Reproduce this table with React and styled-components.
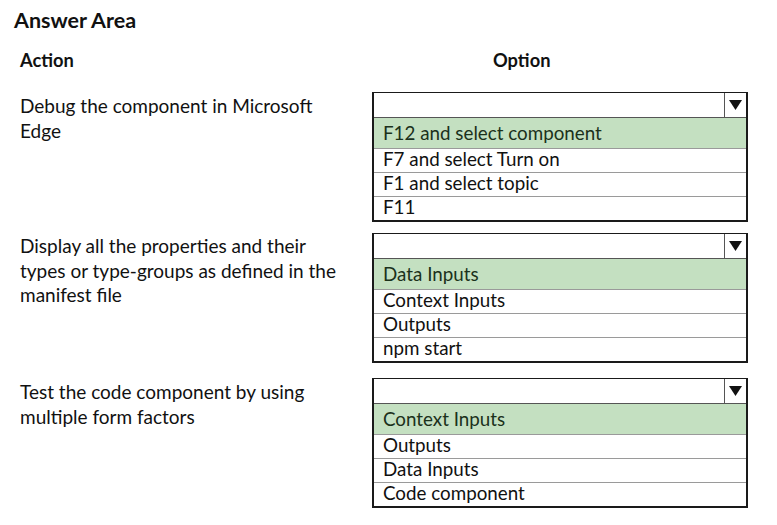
import React from 'react';
import styled, { createGlobalStyle } from 'styled-components';

const GlobalStyle = createGlobalStyle`
    body {
        margin: 0;
        background: #ffffff;
        font-family: Lato, "Open Sans", sans-serif;
        color: #111111;
    }
`;

const Page = styled.div`
    width: 777px;
    height: 525px;
    padding-top: 8px;
    box-sizing: border-box;
`;

const Title = styled.div`
    margin-left: 14px;
    font-size: 21.5px;
    font-weight: 700;
    line-height: 24px;
`;

const Grid = styled.div`
    display: grid;
    grid-template-columns: 352px 376px;
    margin-left: 20px;
`;

const HeaderCell = styled.div`
    margin-top: 16px;
    padding-left: ${(p) => p.$indent || 0}px;
    font-size: 18.3px;
    font-weight: 700;
    line-height: 24px;
`;

const ActionText = styled.div`
    margin-top: ${(p) => p.$gap}px;
    padding-top: ${(p) => p.$nudge}px;
    width: 322px;
    font-size: 19px;
    line-height: 24.5px;
`;

const Dropdown = styled.div`
    margin-top: ${(p) => p.$gap}px;
    border: 2px solid #1a1a1a;
    border-top-width: 1.5px;
    display: flex;
    flex-direction: column;
`;

const SelectBar = styled.div`
    display: flex;
    justify-content: flex-end;
    height: 24px;
    border-bottom: 1px solid #555555;
`;

const ArrowCell = styled.div`
    width: 21px;
    border-left: 1px solid #555555;
    display: flex;
    align-items: center;
    justify-content: center;
`;

const Option = styled.div`
    padding-left: 9px;
    font-size: 18.8px;
    height: ${(p) => (p.$selected ? 30 : 23)}px;
    line-height: ${(p) => (p.$selected ? 30 : 19)}px;
    background: ${(p) => (p.$selected ? '#c4e0c1' : '#ffffff')};
    color: ${(p) => (p.$selected ? '#1b311b' : '#111111')};
    border-bottom: 1px solid #9a9a9a;
    white-space: nowrap;

    &:last-child {
        border-bottom: none;
    }
`;

const Arrow = () => (
    <svg width="13" height="10" viewBox="0 0 13 10">
        <path d="M0 0 H13 L6.5 10 Z" fill="#111" />
    </svg>
);

const questions = [
    {
        action: 'Debug the component in Microsoft Edge',
        options: ['F12 and select component', 'F7 and select Turn on', 'F1 and select topic', 'F11'],
        gap: 20,
        nudge: 2,
    },
    {
        action: 'Display all the properties and their types or type-groups as defined in the manifest file',
        options: ['Data Inputs', 'Context Inputs', 'Outputs', 'npm start'],
        gap: 11,
        nudge: 1,
    },
    {
        action: 'Test the code component by using multiple form factors',
        options: ['Context Inputs', 'Outputs', 'Data Inputs', 'Code component'],
        gap: 15,
        nudge: 2,
    },
];

const App = () => {
    return (
        <>
            <GlobalStyle />
            <Page>
                <Title>Answer Area</Title>
                <Grid>
                    <HeaderCell>Action</HeaderCell>
                    <HeaderCell $indent={121}>Option</HeaderCell>

                    {questions.map((q) => (
                        <React.Fragment key={q.action}>
                            <ActionText $gap={q.gap} $nudge={q.nudge}>{q.action}</ActionText>
                            <Dropdown $gap={q.gap}>
                                <SelectBar>
                                    <ArrowCell>
                                        <Arrow />
                                    </ArrowCell>
                                </SelectBar>
                                {q.options.map((opt, i) => (
                                    <Option key={opt} $selected={i === 0}>{opt}</Option>
                                ))}
                            </Dropdown>
                        </React.Fragment>
                    ))}
                </Grid>
            </Page>
        </>
    );
};

export default App;
